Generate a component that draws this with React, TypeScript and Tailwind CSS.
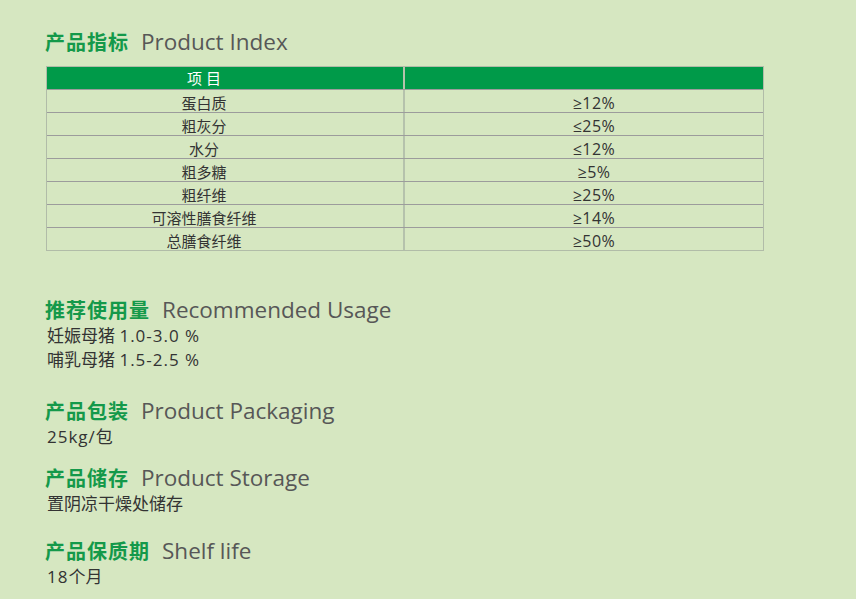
const rows: [string, string][] = [
  ["蛋白质", "≥12%"],
  ["粗灰分", "≤25%"],
  ["水分", "≤12%"],
  ["粗多糖", "≥5%"],
  ["粗纤维", "≥25%"],
  ["可溶性膳食纤维", "≥14%"],
  ["总膳食纤维", "≥50%"],
];

const font = "[font-family:'Open_Sans','Noto_Sans_CJK_SC',sans-serif]";

function Heading({ cn, en }: { cn: string; en: string }) {
  return (
    <div className="flex items-center h-[28px]">
      <span className="text-[20px] font-bold tracking-[1px] text-[#14994a] [font-family:'Noto_Sans_CJK_SC',sans-serif]">
        {cn}
      </span>
      <span className="ml-[12px] text-[22.5px] text-[#575757] [font-family:'Open_Sans',sans-serif]">
        {en}
      </span>
    </div>
  );
}

function Line({ children }: { children: React.ReactNode }) {
  return (
    <div className="h-[24px] leading-[24px] pl-[2px] text-[17px] text-[#333]">
      {children}
    </div>
  );
}

export default function App() {
  return (
    <div
      className={`w-[856px] h-[599px] overflow-hidden bg-[#d6e7c1] pl-[45px] pt-[28px] ${font}`}
    >
      <Heading cn="产品指标" en="Product Index" />

      <div className="mt-[10px] ml-[1px] w-[718px] border border-[#b1bca8] text-[15px] text-[#333]">
        <div className="flex h-[22px] bg-[#009a49] text-white">
          <div className="w-[358px] border-r-2 border-[#b5c2ac] flex items-center justify-center pr-[42px]">
            项 目
          </div>
          <div className="flex-1" />
        </div>
        {rows.map(([name, value]) => (
          <div key={name} className="flex h-[23px] border-t border-[#9c9c9c]">
            <div className="w-[358px] border-r-2 border-[#b5c2ac] flex items-center justify-center pr-[42px] pt-[4px]">
              {name}
            </div>
            <div className="flex-1 flex items-center justify-center pl-[20px] pt-[4px] text-[16px] tracking-[0.5px]">
              {value}
            </div>
          </div>
        ))}
      </div>

      <div className="mt-[45px]">
        <Heading cn="推荐使用量" en="Recommended Usage" />
        <Line>
          妊娠母猪 <span className="tracking-[1px]">1.0-3.0 %</span>
        </Line>
        <Line>
          哺乳母猪 <span className="tracking-[1px]">1.5-2.5 %</span>
        </Line>
      </div>

      <div className="mt-[25px]">
        <Heading cn="产品包装" en="Product Packaging" />
        <Line>
          <span className="tracking-[1px]">25kg/</span>包
        </Line>
      </div>

      <div className="mt-[15px]">
        <Heading cn="产品储存" en="Product Storage" />
        <Line>置阴凉干燥处储存</Line>
      </div>

      <div className="mt-[21px]">
        <Heading cn="产品保质期" en="Shelf life" />
        <Line>
          <span className="tracking-[1px]">18</span>个月
        </Line>
      </div>
    </div>
  );
}
